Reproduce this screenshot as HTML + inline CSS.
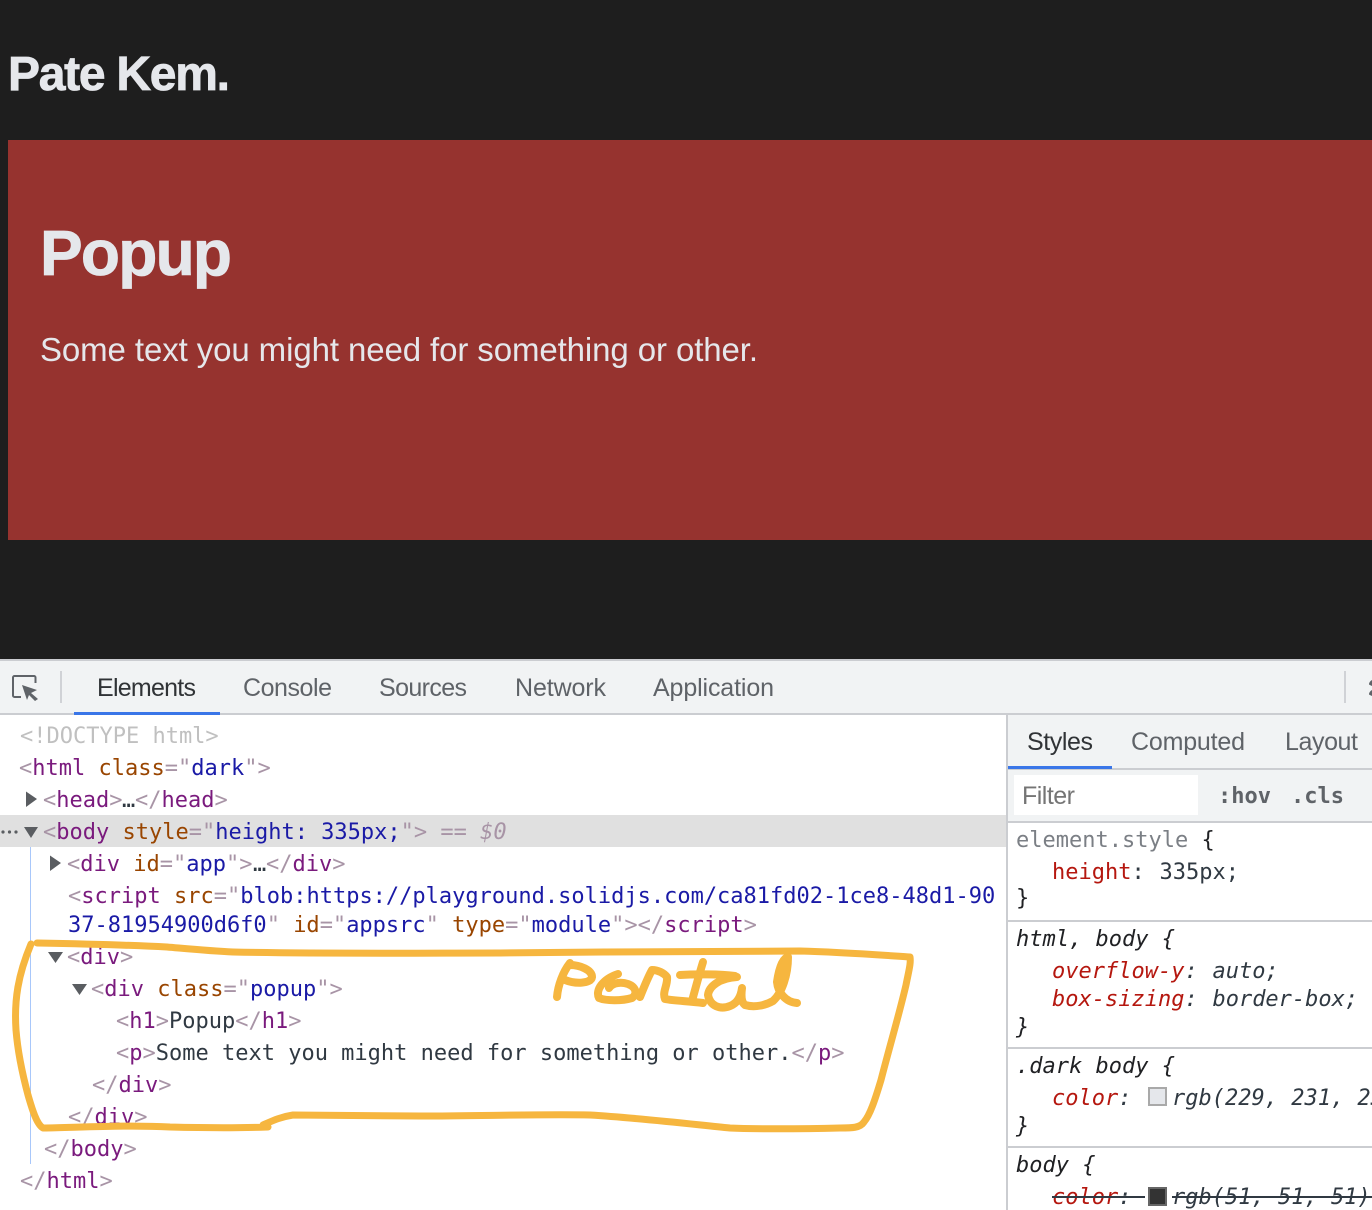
<!DOCTYPE html>
<html lang="en"><head><meta charset="utf-8"><title>Pate Kem</title>
<style>
html,body{margin:0;padding:0;background:#1e1e1e}
#r{position:relative;width:1372px;height:1210px;overflow:hidden;background:#1e1e1e}
.b{position:absolute}
.l{position:absolute;margin-top:2px;height:32px;line-height:32px;font:22px/32px "DejaVu Sans Mono","Liberation Mono",monospace;white-space:pre;color:#303942}
.g{color:#a894a6}.t{color:#7a1a7d}.a{color:#994500}.v{color:#1a1aa6}
.i{font-style:italic}.k{color:#b5170f}.d{color:#202124}.o{margin-left:1.5px}
svg{position:absolute;left:0;top:0}
</style></head><body><div id="r">
<div class="b" style="left:8px;top:140px;width:1364px;height:400px;background:#96332f"></div>
<div class="b" style="left:0;top:659px;width:1372px;height:551px;background:#fff"></div>
<div class="b" style="left:0;top:659px;width:1372px;height:2px;background:#cbcdd1"></div>
<div class="b" style="left:0;top:661px;width:1372px;height:52px;background:#f1f3f4"></div>
<div class="b" style="left:0;top:713px;width:1372px;height:2px;background:#cbcdd1"></div>
<div class="b" style="left:74px;top:712px;width:146px;height:3px;background:#3a76e8"></div>
<div class="b" style="left:60px;top:671px;width:2px;height:32px;background:#d0d2d6"></div>
<div class="b" style="left:1344px;top:671px;width:2px;height:32px;background:#d0d2d6"></div>
<div class="b" style="left:0;top:815px;width:1006px;height:32px;background:#e0e0e0"></div>
<div class="b" style="left:30px;top:847px;width:1px;height:317px;background:#a8c7fa"></div>
<div class="b" style="left:1006px;top:715px;width:2px;height:495px;background:#cbcdd1"></div>
<div class="b" style="left:1008px;top:715px;width:364px;height:106px;background:#f1f3f4"></div>
<div class="b" style="left:1008px;top:768px;width:364px;height:2px;background:#cbcdd1"></div>
<div class="b" style="left:1008px;top:766px;width:104px;height:3px;background:#3a76e8"></div>
<div class="b" style="left:1014px;top:775px;width:184px;height:40px;background:#fff"></div>
<div class="b" style="left:1008px;top:821px;width:364px;height:2px;background:#cbcdd1"></div>
<div class="b" style="left:1008px;top:920px;width:364px;height:2px;background:#cbcdd1"></div>
<div class="b" style="left:1008px;top:1047px;width:364px;height:2px;background:#cbcdd1"></div>
<div class="b" style="left:1008px;top:1146px;width:364px;height:2px;background:#cbcdd1"></div>

<div class="l" style="left:20px;top:719px;color:#c0c0c0">&lt;!DOCTYPE html&gt;</div>
<div class="l" style="left:19px;top:751px"><span class="g">&lt;</span><span class="t">html</span> <span class="a">class</span><span class="g">="</span><span class="v">dark</span><span class="g">"&gt;</span></div>
<div class="l" style="left:43px;top:783px"><span class="g">&lt;</span><span class="t">head</span><span class="g">&gt;</span></div>
<div class="l" style="left:122px;top:783px">…</div>
<div class="l" style="left:135px;top:783px"><span class="g">&lt;/</span><span class="t">head</span><span class="g">&gt;</span></div>
<div class="l" style="left:43px;top:815px"><span class="g">&lt;</span><span class="t">body</span> <span class="a">style</span><span class="g">="</span><span class="v">height: 335px;</span><span class="g">"&gt; == <span class="i">$0</span></span></div>
<div class="l" style="left:67px;top:847px"><span class="g">&lt;</span><span class="t">div</span> <span class="a">id</span><span class="g">="</span><span class="v">app</span><span class="g">"&gt;</span></div>
<div class="l" style="left:253px;top:847px">…</div>
<div class="l" style="left:266px;top:847px"><span class="g">&lt;/</span><span class="t">div</span><span class="g">&gt;</span></div>
<div class="l" style="left:68px;top:879px"><span class="g">&lt;</span><span class="t">script</span> <span class="a">src</span><span class="g">="</span><span class="v">blob:https://playground.solidjs.com/ca81fd02-1ce8-48d1-90</span></div>
<div class="l" style="left:68px;top:908px"><span class="v">37-81954900d6f0</span><span class="g">"</span> <span class="a">id</span><span class="g">="</span><span class="v">appsrc</span><span class="g">"</span> <span class="a">type</span><span class="g">="</span><span class="v">module</span><span class="g">"&gt;&lt;/</span><span class="t">script</span><span class="g">&gt;</span></div>
<div class="l" style="left:67px;top:940px"><span class="g">&lt;</span><span class="t">div</span><span class="g">&gt;</span></div>
<div class="l" style="left:91px;top:972px"><span class="g">&lt;</span><span class="t">div</span> <span class="a">class</span><span class="g">="</span><span class="v">popup</span><span class="g">"&gt;</span></div>
<div class="l" style="left:116px;top:1004px"><span class="g">&lt;</span><span class="t">h1</span><span class="g">&gt;</span>Popup<span class="g">&lt;/</span><span class="t">h1</span><span class="g">&gt;</span></div>
<div class="l" style="left:116px;top:1036px"><span class="g">&lt;</span><span class="t">p</span><span class="g">&gt;</span>Some text you might need for something or other.<span class="g">&lt;/</span><span class="t">p</span><span class="g">&gt;</span></div>
<div class="l" style="left:92px;top:1068px"><span class="g">&lt;/</span><span class="t">div</span><span class="g">&gt;</span></div>
<div class="l" style="left:68px;top:1100px"><span class="g">&lt;/</span><span class="t">div</span><span class="g">&gt;</span></div>
<div class="l" style="left:44px;top:1132px"><span class="g">&lt;/</span><span class="t">body</span><span class="g">&gt;</span></div>
<div class="l" style="left:20px;top:1164px"><span class="g">&lt;/</span><span class="t">html</span><span class="g">&gt;</span></div>

<div class="l" style="left:1016px;top:823px;color:#7b7f85">element.style <span class="d">{</span></div>
<div class="l" style="left:1052px;top:855px"><span class="k">height</span>: <span class="o">335px;</span></div>
<div class="l d" style="left:1016px;top:881px">}</div>
<div class="l d i" style="left:1016px;top:922px">html, body {</div>
<div class="l i" style="left:1052px;top:954px"><span class="k">overflow-y</span>: <span class="o">auto;</span></div>
<div class="l i" style="left:1052px;top:982px"><span class="k">box-sizing</span>: <span class="o">border-box;</span></div>
<div class="l d i" style="left:1016px;top:1010px">}</div>
<div class="l d i" style="left:1016px;top:1049px">.dark body {</div>
<div class="l i" style="left:1052px;top:1081px"><span class="k">color</span>:</div>
<div class="b" style="left:1148px;top:1087px;width:15px;height:15px;background:#e5e7eb;border:2px solid #a9a9a9"></div>
<div class="l i" style="left:1172px;top:1081px">rgb(229, 231, 235)</div>
<div class="l d i" style="left:1016px;top:1109px">}</div>
<div class="l d i" style="left:1016px;top:1148px">body {</div>
<div class="l i" style="left:1052px;top:1180px"><span class="k">color</span>:</div>
<div class="b" style="left:1148px;top:1187px;width:15px;height:15px;background:#333;border:2px solid #666"></div>
<div class="l i" style="left:1172px;top:1180px">rgb(51, 51, 51)</div>
<div class="b" style="left:1052px;top:1196px;width:93px;height:2px;background:#303942"></div>
<div class="b" style="left:1172px;top:1196px;width:200px;height:2px;background:#303942"></div>

<svg width="1372" height="1210" viewBox="0 0 1372 1210" xmlns="http://www.w3.org/2000/svg">
<g font-family="'Liberation Sans',Arial,sans-serif" fill="#e5e7eb" stroke="#e5e7eb" font-weight="700">
<text x="8" y="90" font-size="48" stroke-width="0.8" textLength="222" lengthAdjust="spacing">Pate Kem.</text>
<text x="40" y="275" font-size="64" stroke-width="0.8" textLength="192" lengthAdjust="spacing">Popup</text>
</g>
<text x="40" y="361" font-family="'Liberation Sans',Arial,sans-serif" font-size="33" fill="#e5e7eb" textLength="718" lengthAdjust="spacing">Some text you might need for something or other.</text>
<g font-family="'Liberation Sans',Arial,sans-serif" font-size="25" fill="#5f6368">
<text x="97" y="696" fill="#303336" textLength="99" lengthAdjust="spacing">Elements</text>
<text x="243" y="696" textLength="89" lengthAdjust="spacing">Console</text>
<text x="379" y="696" textLength="88" lengthAdjust="spacing">Sources</text>
<text x="515" y="696" textLength="91" lengthAdjust="spacing">Network</text>
<text x="653" y="696" textLength="121" lengthAdjust="spacing">Application</text>
<text x="1027" y="750" fill="#303336" textLength="66" lengthAdjust="spacing">Styles</text>
<text x="1131" y="750" textLength="114" lengthAdjust="spacing">Computed</text>
<text x="1285" y="750" textLength="73" lengthAdjust="spacing">Layout</text>
<text x="1022" y="804" fill="#757575" textLength="53" lengthAdjust="spacing">Filter</text>
</g>
<g font-family="'DejaVu Sans Mono',monospace" font-size="22" font-weight="700" fill="#5f6368">
<text x="1218" y="803">:hov</text>
<text x="1291" y="803">.cls</text>
</g>
<path d="M21 697H14.500a1.500 1.500 0 0 1-1.500-1.500V677.500a1.500 1.500 0 0 1 1.500-1.500H34a1.500 1.500 0 0 1 1.500 1.500V683" fill="none" stroke="#5f6368" stroke-width="2"/>
<path d="M22 685 37 690 31 693 38 699 35 701 29 695 27 700z" fill="#5f6368"/>
<path d="M1372 680c-2 1-3 3-3 4s1 1 3 2zM1372 690c-2 1-3 3-3 4s1 1 3 2z" fill="#5f6368"/>
<g fill="#5a5d61">
<path d="M26 791.500 37 799 26 807zM50 855.500 61 863 50 871z"/>
<path d="M24 827H38L31 838zM48 952H63L55.500 963zM72 984H87L79.500 995z"/>
<circle cx="3" cy="832" r="1.600"/><circle cx="9.500" cy="832" r="1.600"/><circle cx="16" cy="832" r="1.600"/>
</g>
<g fill="none" stroke="#f6b63f" stroke-width="7" stroke-linecap="round" stroke-linejoin="round">
<path d="M37 943C90 944 130 945 167 947C190 949 210 951 233 952C320 954 430 953 500 953C600 952 720 951 800 951C840 952 880 955 910 957C911 963 909 970 906 985C899 1015 890 1045 881 1080C875 1100 870 1115 864 1122C860 1128 852 1128 840 1128C800 1129 750 1129 730 1128C690 1124 640 1118 590 1115C540 1114 480 1116 420 1116C370 1116 330 1115 293 1115C280 1117 272 1121 263 1125L268 1127C240 1128 210 1128 170 1127C130 1125 90 1127 43 1128C36 1124 31 1105 28 1095C24 1080 18 1055 16 1030C14 1000 18 975 31 944"/>
</g>
<g fill="none" stroke="#f6b63f" stroke-width="8" stroke-linecap="round" stroke-linejoin="round">
<path d="M557 997C558 985 563 972 570 963"/>
<path d="M570 965C580 965 592 970 592 977C591 984 575 984 565 980"/>
<path d="M609 988C613 982 622 982 628 984C636 987 638 994 632 998C622 1001 606 1001 599 998C595 990 603 979 618 974"/>
<path d="M640 997C644 987 648 977 652 970C658 970 664 973 667 977C668 985 662 992 665 999C675 1001 690 1001 703 1003"/>
<path d="M703 962C699 975 695 990 692 1001"/>
<path d="M680 975C695 974 720 974 735 976"/>
<path d="M737 977C720 978 709 986 708 995C710 1006 720 1010 730 1006C738 1003 741 996 742 988C741 996 741 1002 745 1005C755 1008 766 1005 773 1001C782 993 788 975 788 957C783 958 779 968 777 982C778 992 785 1002 797 1003"/>
</g>
</svg>
</div></body></html>
